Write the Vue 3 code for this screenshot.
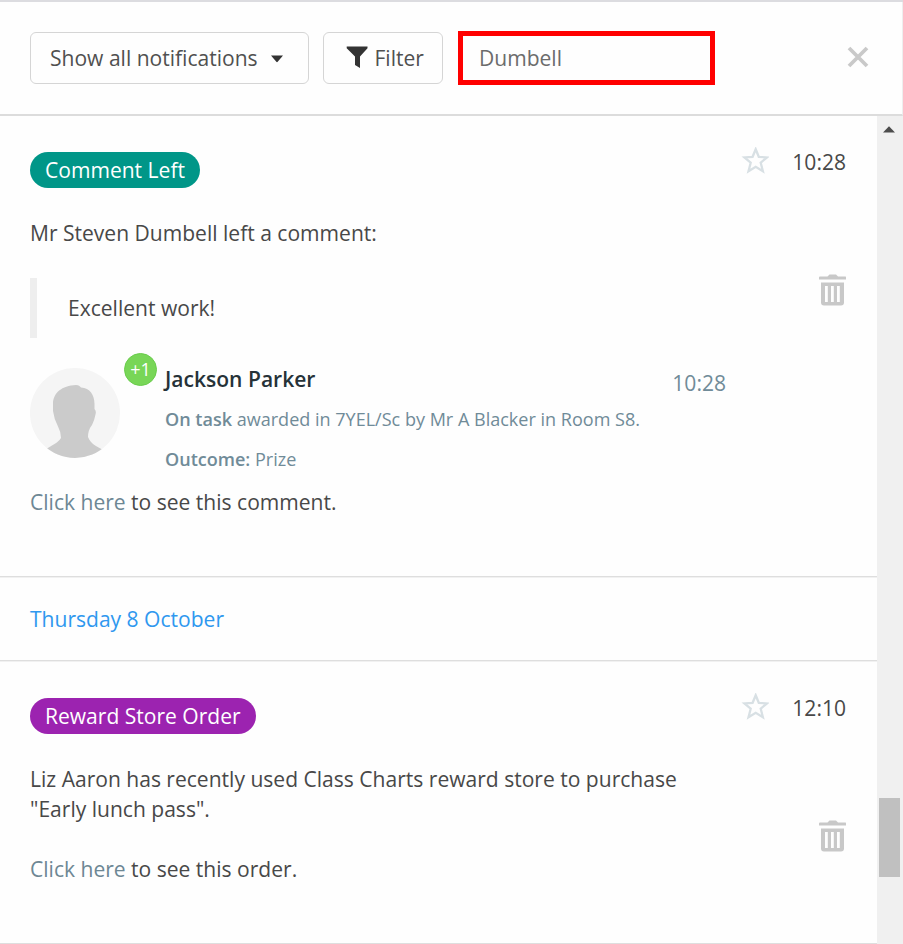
<script setup>
const starPath = 'M14.7 2.2 L17.8 9.8 L26 10.4 L19.7 15.700 L21.900 24.200 L14.7 19.8 L7.5 24.200 L9.700 15.700 L3.4 10.4 L11.6 9.8 Z'
const items = [
  {
    id: 1,
    label: 'Comment Left',
    tone: 'teal',
    time: '10:28',
    lines: ['Mr Steven Dumbell left a comment:'],
    quote: 'Excellent work!',
    linkTail: 'to see this comment.',
    award: {
      points: '+1',
      name: 'Jackson Parker',
      time: '10:28',
      behaviour: 'On task',
      detail: 'awarded in 7YEL/Sc by Mr A Blacker in Room S8.',
      outcome: 'Prize',
    },
  },
  {
    id: 2,
    heading: 'Thursday 8 October',
    label: 'Reward Store Order',
    tone: 'purple',
    time: '12:10',
    lines: ['Liz Aaron has recently used Class Charts reward store to purchase', '"Early lunch pass".'],
    linkTail: 'to see this order.',
  },
]
</script>

<template>
  <div class="panel">
    <header class="toolbar">
      <button class="btn btn-show"><span>Show all notifications</span>
        <svg class="caret" width="14" height="8" viewBox="0 0 14 8"><path d="M1 .5h12L7.7 6.8q-.7.7-1.4 0z" fill="#333" /></svg>
      </button>
      <button class="btn btn-filter">
        <svg width="22" height="23" viewBox="0 0 22 23"><path d="M.7.5H21.5V2.2L14 10.5V22L9 18.9V10.5L.7 2.2Z" fill="#333" /></svg>
        <span>Filter</span>
      </button>
      <div class="search"><span>Dumbell</span></div>
      <svg class="close" width="22" height="22" viewBox="0 0 22 22"><path d="M2 2 L20 20 M20 2 L2 20" stroke="#c9c9c9" stroke-width="3.8" /></svg>
    </header>

    <div class="body">
      <main class="list">
        <template v-for="item in items" :key="item.id">
          <h2 v-if="item.heading" class="day">{{ item.heading }}</h2>
          <article class="item" :class="item.award ? 'item-comment' : 'item-order'">
            <div class="content">
              <span class="pill" :class="item.tone">{{ item.label }}</span>
              <div class="message">
                <div v-for="line in item.lines" :key="line">{{ line }}</div>
              </div>
              <blockquote v-if="item.quote" class="quote">{{ item.quote }}</blockquote>
              <section v-if="item.award" class="award">
                <div class="avatar">
                  <svg width="90" height="90" viewBox="0 0 90 90">
                    <defs><clipPath id="disc"><circle cx="45" cy="45" r="45" /></clipPath></defs>
                    <g clip-path="url(#disc)">
                      <rect width="90" height="90" fill="#f5f5f5" />
                      <path d="M46 17C49 17 49.500 18 51 19.5C60 20 64.500 27 64.500 36V41Q66.500 43 65.500 46.500Q64.500 52 62 57Q58 62 58 69C61 76 66 78 73 82V92H15V82C22 77 28 75 31 70Q31 64 28 58.500Q24 51 23 43V36C23 25 32 17.500 46 17Z" fill="#cbcbcb" />
                    </g>
                  </svg>
                  <span class="points">{{ item.award.points }}</span>
                </div>
                <div class="award-text">
                  <div class="award-head"><span class="name">{{ item.award.name }}</span><span class="award-time">{{ item.award.time }}</span></div>
                  <div class="detail"><b>{{ item.award.behaviour }}</b> {{ item.award.detail }}</div>
                  <div class="detail"><b>Outcome:</b> {{ item.award.outcome }}</div>
                </div>
              </section>
              <p class="see"><a>Click here</a> {{ item.linkTail }}</p>
            </div>
            <aside class="side">
              <div class="meta">
                <svg width="28" height="28" viewBox="0 0 28 28"><path :d="starPath" fill="none" stroke="#d8e0e4" stroke-width="2.3" /></svg>
                <span>{{ item.time }}</span>
              </div>
              <svg class="trash" width="28" height="32" viewBox="0 0 28 32">
                <path fill="#c8c8c8" fill-rule="evenodd" d="M1 2.500H8.500L10.500.5H17L19 2.500H26.500Q27 2.500 27 3.500V5.500H0V3.500Q0 2.500 1 2.500ZM2 8.500H25V28.500Q25 31.500 22 31.500H5Q2 31.500 2 28.500ZM6 12V28H8.800V12ZM12 12V28H14.800V12ZM18 12V28H20.800V12Z" />
              </svg>
            </aside>
          </article>
        </template>
      </main>
      <div class="scrollbar">
        <svg class="up" width="12" height="7" viewBox="0 0 12 7"><path d="M0 6.500L6 .3L12 6.500Z" fill="#4c4c4c" /></svg>
        <div class="thumb"></div>
      </div>
    </div>
  </div>
</template>

<style>
body { margin: 0; background: #fefefe; overflow: hidden; }
</style>

<style scoped>
* { box-sizing: border-box; }
.panel {
  width: 903px; height: 944px; overflow: hidden; display: flex; flex-direction: column;
  background: #fefefe; border-top: 2px solid #dcdce0;
  font-family: "Open Sans", sans-serif; font-size: 21.050px; line-height: 30px; color: #484848; white-space: nowrap;
}
.toolbar { height: 114px; flex: none; display: flex; align-items: flex-start; padding: 29px 33px 0 30px; border-bottom: 2px solid #dcdcdc; border-right: 1px solid #eee; }
.btn { height: 52px; border: 1.500px solid #d5d5d5; border-radius: 6px; background: #fefefe; display: flex; align-items: center; font: inherit; color: #505050; margin-top: 1px; padding: 0 0 1px; }
.btn-show { width: 279px; padding-left: 19px; }
.caret { margin-left: 12px; margin-top: 2px; }
.btn-filter { width: 120px; margin-left: 14px; padding-left: 21.500px; gap: 7px; }
.search { width: 257px; height: 54px; margin-left: 15px; border: 5px solid #f00; padding: 7px 0 0 16px; color: #6c6c6c; }
.close { margin: 15px 0 0 auto; }
.body { flex: 1; min-height: 0; display: flex; }
.list { width: 877px; }
.item { display: flex; padding: 36px 30px 0; border-bottom: 1px solid #dedede; box-shadow: 0 1px #f1f1f1; }
.item-comment { height: 461px; }
.item-order { height: 283px; padding-top: 37px; }
.content { width: 697px; }
.pill { display: flex; align-items: center; width: 170px; height: 36px; border-radius: 18px; padding: 0 0 1px 15px; color: #fff; font-weight: 500; }
.teal { background: #009688; }
.purple { background: #9c23b0; width: 226px; }
.message { padding-top: 30px; }
.quote { margin: 30px 0; height: 60px; border-left: 7px solid #eee; padding: 15px 0 0 31px; }
.award { display: flex; height: 119px; }
.avatar { position: relative; width: 90px; height: 90px; }
.points { position: absolute; left: 94px; top: -15px; width: 33px; height: 33px; border-radius: 50%; background: #78d657; border: 1px solid #69cc4b; color: #fff; font-size: 18px; line-height: 31px; text-align: center; }
.award-text { margin-left: 45px; flex: 1; }
.award-head { display: flex; justify-content: space-between; height: 36px; margin-top: -4px; padding-right: 1px; }
.name { font-weight: 600; color: #263238; }
.award-time { color: #708b98; padding-top: 4px; }
.detail { font-size: 18.050px; height: 39.500px; line-height: 38px; color: #708b98; }
b { font-weight: 600; }
.see { margin: 0; }
.item-order .see { margin-top: 30px; }
.see a { color: #6d8794; }
.side { width: 120px; display: flex; flex-direction: column; align-items: flex-end; }
.meta { display: flex; justify-content: space-between; width: 106px; height: 28px; margin-top: -5px; padding-right: 1px; }
.trash { margin-top: 99px; }
.day { margin: 0; height: 84px; border-bottom: 1px solid #dedede; box-shadow: 0 1px #f1f1f1; padding: 27px 30px 0; font-size: inherit; font-weight: 400; color: #2f98ef; }
.scrollbar { width: 26px; background: #f0f0f0; display: flex; flex-direction: column; align-items: center; }
.up { margin-top: 10px; margin-right: 2px; flex: none; }
.thumb { margin-top: 665px; margin-right: 1px; width: 21px; height: 79px; background: #c0c0c0; flex: none; }
</style>
